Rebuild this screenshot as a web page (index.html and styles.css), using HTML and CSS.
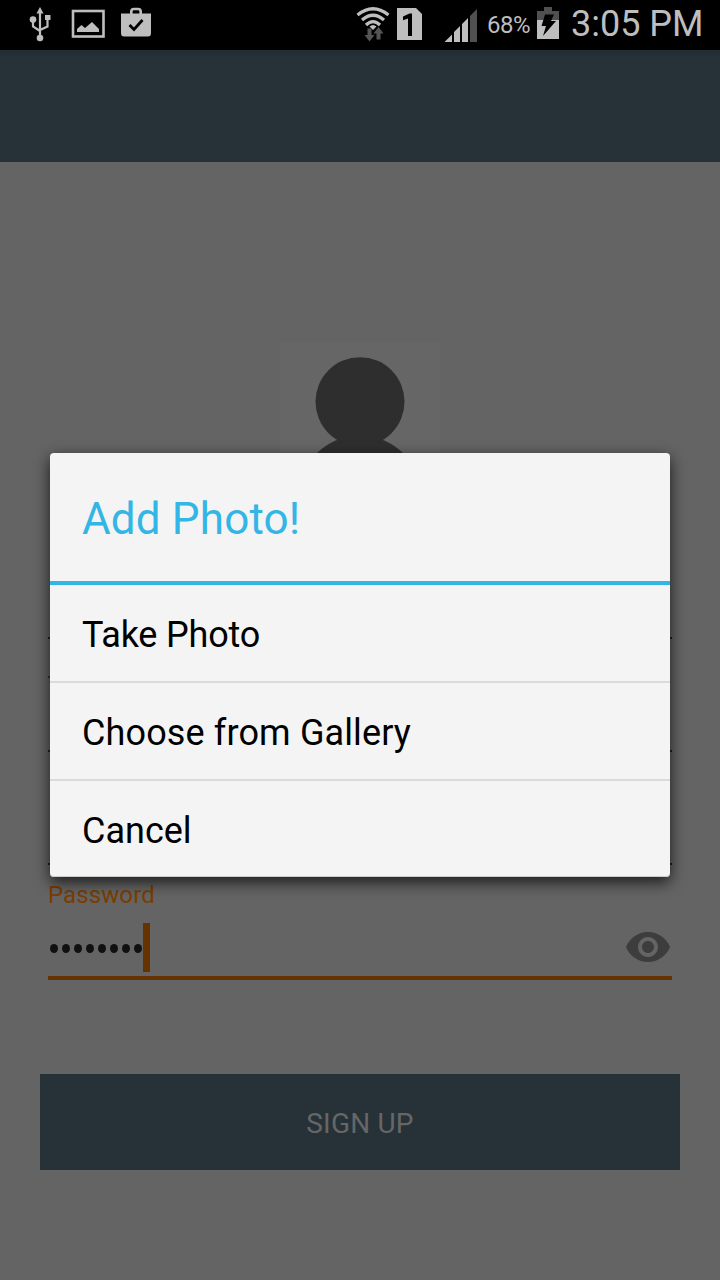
FILE: index.html
```html
<!DOCTYPE html>
<html lang="en">
<head>
<meta charset="utf-8">
<title>Sign Up</title>
<link rel="stylesheet" href="styles.css">
</head>
<body>
<div class="screen">
  <header class="status">
    <svg class="status-icons" width="180" height="50" viewBox="0 0 180 50">
      <g fill="none" stroke="#bebebe" stroke-width="2.200">
        <path d="M40 11V37M33 20V26.500L40 31M47.500 18V26.500L40 30"/>
        <rect x="73" y="11" width="30.500" height="25.500" stroke-width="2.600"/>
        <path d="M131.300 15V11.500Q131.300 9 133.800 9H138.200Q140.700 9 140.700 11.500V15" stroke-width="2.600"/>
      </g>
      <g fill="#bebebe">
        <path d="M36.500 13.500L40 7L43.500 13.500Z"/>
        <circle cx="33" cy="19.500" r="3.300"/>
        <rect x="45" y="15" width="5.500" height="5"/>
        <circle cx="40" cy="38" r="3.300"/>
        <path d="M77 32V29L81.500 25L85 28L92 22L99 29V32Z"/>
        <path d="M121 13.500H151V33Q151 36.500 148 36.500H124Q121 36.500 121 33Z"/>
      </g>
      <path d="M129.500 25L134 29.500L142.500 20" fill="none" stroke="#000" stroke-width="2.800"/>
    </svg>
    <svg class="signal-icons" width="138" height="50" viewBox="340 0 138 50">
      <g fill="none" stroke="#bebebe" stroke-width="3.200">
        <path d="M357.500 15Q373 2.500 388.500 15"/>
        <path d="M362 20Q373 10.500 384 20"/>
        <path d="M366 25Q373 18 380 25"/>
      </g>
      <path d="M369.500 26.500Q373 23.500 376.500 26.500L373 30Z" fill="#bebebe"/>
      <path d="M367.500 28.500H371.500V35H374.500L369.500 41.500L364.500 35H367.500ZM376.500 39.500H380.500V33.500H383.500L378.500 27L373.500 33.500H376.500Z" fill="#555"/>
      <path d="M397 8H416L422 14V40H397Z" fill="#bebebe"/>
      <path d="M408 36V18.500L403 20.300V16.500L409.500 13.500H412V36Z" fill="#000"/>
      <path d="M444.500 42L452 34.500V42ZM454 42V32L460 26V42ZM462 42V24L468 18V42Z" fill="#bebebe"/>
      <path d="M470 42V16L477 9V42Z" fill="#505050"/>
    </svg>
    <span class="percent">68%</span>
    <svg class="battery" width="22" height="50" viewBox="0 0 22 50">
      <path d="M0 11H7V7H15V11H22V20H0Z" fill="#505050"/>
      <path d="M0 20H22V39H0Z" fill="#bebebe"/>
      <path d="M8 14.500H17L14 21H19L6 36L9 26H4.500Z" fill="#000"/>
    </svg>
    <span class="clock">3:05 PM</span>
  </header>
  <div class="appbar"></div>
  <main class="form">
    <svg class="avatar" width="160" height="160" viewBox="0 0 160 160">
      <rect width="160" height="160" fill="#666"/>
      <circle cx="80" cy="59.700" r="44.500" fill="#2e2e2e"/>
      <circle cx="80" cy="155.200" r="61.600" fill="#2e2e2e"/>
    </svg>
    <div class="field first"></div>
    <div class="field"></div>
    <div class="field"></div>
    <label class="label">Password</label>
    <div class="password">
      <div class="dots"><i></i><i></i><i></i><i></i><i></i><i></i><i></i><i></i></div>
      <div class="cursor"></div>
      <svg class="eye" width="44" height="30" viewBox="1 4.500 22 15">
        <path fill="#3d3d3d" d="M12 4.500C7 4.500 2.730 7.610 1 12c1.730 4.390 6 7.500 11 7.500s9.270-3.110 11-7.500c-1.730-4.390-6-7.500-11-7.500zM12 17c-2.760 0-5-2.240-5-5s2.240-5 5-5 5 2.240 5 5-2.240 5-5 5zm0-8c-1.660 0-3 1.340-3 3s1.340 3 3 3 3-1.340 3-3-1.340-3-3-3z"/>
      </svg>
    </div>
    <button class="signup">SIGN UP</button>
  </main>
  <section class="dialog">
    <h1 class="title">Add Photo!</h1>
    <div class="option take">Take Photo</div>
    <div class="option choose">Choose from Gallery</div>
    <div class="option">Cancel</div>
  </section>
</div>
</body>
</html>
```
FILE: styles.css
```css
* { box-sizing: border-box; }
body { margin: 0; background: #646464; font-family: Roboto, sans-serif; }
.screen { position: relative; width: 720px; height: 1280px; overflow: hidden; }
.status { display: flex; height: 50px; background: #000; color: #bebebe; white-space: nowrap; }
.status svg { flex: none; }
.signal-icons { margin-left: 160px; }
.percent { width: 50px; margin-left: 9px; font-size: 24px; letter-spacing: -0.5px; line-height: 50px; }
.clock { margin-left: 12px; font-size: 36px; line-height: 49px; }
.appbar { height: 112px; background: linear-gradient(#222d32, #263238 8px); }
.form { display: flex; flex-direction: column; padding: 180px 48px 0; }
.avatar { align-self: center; flex: none; }
.field { height: 113px; border-bottom: 2px solid #202020; }
.field.first { height: 137px; }
.field.first + .field { background: linear-gradient(#333, #333) 0 37px / 2px 2px no-repeat; }
.label { height: 58px; padding-top: 15px; font-size: 24px; letter-spacing: 0.1px; line-height: 30px; color: #7a3d00; }
.password { display: flex; height: 57px; border-bottom: 4px solid #663300; }
.dots { display: flex; gap: 4px; width: 95px; padding: 21px 0 0 2px; }
.dots i { flex: none; width: 8px; height: 9px; border-radius: 50%; background: #101010; }
.cursor { width: 7px; height: 49px; background: #663300; }
.eye { margin: 9px 2px 0 auto; }
.signup { height: 96px; margin: 94px -8px 0; padding: 2px 0 0; border: 0; background: #263238; color: #666; font: 28px Roboto, sans-serif; letter-spacing: 0.2px; }
.dialog { position: absolute; left: 50px; top: 453px; width: 620px; height: 424px; border-radius: 4px; background: #f4f4f4; box-shadow: 0 5px 15px rgba(0,0,0,.75), inset 0 -1px #ccc; color: #000; }
.title { height: 132px; margin: 0; padding-left: 32px; border-bottom: 4px solid #33b5e5; font-size: 44px; font-weight: 400; letter-spacing: 0.15px; line-height: 133px; color: #33b5e5; }
.option { height: 98px; padding-left: 32px; border-bottom: 2px solid #dadada; font-size: 36px; line-height: 101px; }
.take { letter-spacing: -0.2px; }
.choose { letter-spacing: 0.13px; }
.option:last-child { height: 96px; border: 0; }
```
